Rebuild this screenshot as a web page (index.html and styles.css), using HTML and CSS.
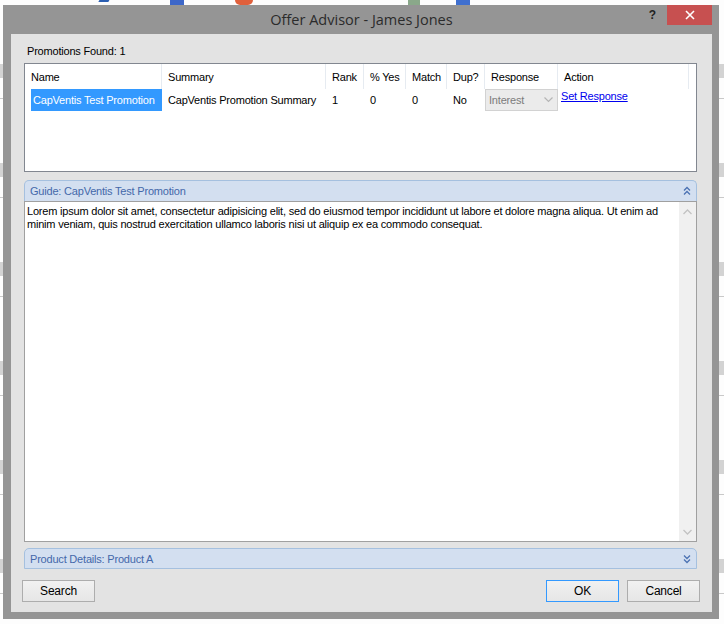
FILE: index.html
```html
<!DOCTYPE html>
<html lang="en">
  <head>
    <meta charset="UTF-8" />
    <meta name="viewport" content="width=device-width, initial-scale=1.0" />
    <title>Offer Advisor - James Jones</title>
    <link rel="stylesheet" href="styles.css">
  </head>

  <body>
    <div class="desktop">
      <span class="tool tool-check"></span>
      <span class="tool tool-blue"></span>
      <span class="tool tool-red"></span>
      <span class="tool tool-green"></span>
      <span class="tool tool-blue2"></span>
    </div>

    <div class="window">
      <div class="titlebar">
        <div class="title">Offer Advisor - James Jones</div>
        <div class="controls">
          <span class="help">?</span>
          <span class="close">
            <svg width="10" height="10" viewBox="0 0 10 10">
              <path d="M1 1 L9 9 M9 1 L1 9" stroke="#fff" stroke-width="1.6" fill="none" />
            </svg>
          </span>
        </div>
      </div>

      <div class="client">
        <div class="found">Promotions Found: 1</div>

        <div class="list">
          <div class="list-head">
            <div class="cell">Name</div>
            <div class="cell">Summary</div>
            <div class="cell">Rank</div>
            <div class="cell">% Yes</div>
            <div class="cell">Match</div>
            <div class="cell">Dup?</div>
            <div class="cell">Response</div>
            <div class="cell">Action</div>
            <div class="cell last"></div>
          </div>
          <div class="list-row">
            <div class="cell"><span class="selected">CapVentis Test Promotion</span></div>
            <div class="cell">CapVentis Promotion Summary</div>
            <div class="cell">1</div>
            <div class="cell">0</div>
            <div class="cell">0</div>
            <div class="cell">No</div>
            <div class="cell combo-cell">
              <div class="combo">
                <span>Interest</span>
                <svg width="9" height="6" viewBox="0 0 9 6">
                  <path d="M0.5 0.5 L4.5 4.5 L8.5 0.5" stroke="#b5b5b5" stroke-width="1.2" fill="none" />
                </svg>
              </div>
            </div>
            <div class="cell action-cell"><a href="#" class="link">Set Response</a></div>
            <div class="cell last"></div>
          </div>
        </div>

        <div class="panel-head guide-head">
          <span>Guide: CapVentis Test Promotion</span>
          <svg width="8" height="10" viewBox="0 0 8 10">
            <path d="M1 4.5 L4 1.5 L7 4.5 M1 8.5 L4 5.5 L7 8.5" stroke="#4b72b3" stroke-width="1.3" fill="none" />
          </svg>
        </div>
        <div class="guide-body">
          <p class="guide-text">Lorem ipsum dolor sit amet, consectetur adipisicing elit, sed do eiusmod tempor incididunt ut labore et dolore magna aliqua. Ut enim ad minim veniam, quis nostrud exercitation ullamco laboris nisi ut aliquip ex ea commodo consequat.</p>
          <div class="scrollbar">
            <svg width="9" height="6" viewBox="0 0 9 6">
              <path d="M0.5 5 L4.5 1 L8.5 5" stroke="#c3c3c3" stroke-width="1.3" fill="none" />
            </svg>
            <svg width="9" height="6" viewBox="0 0 9 6">
              <path d="M0.5 1 L4.5 5 L8.5 1" stroke="#c3c3c3" stroke-width="1.3" fill="none" />
            </svg>
          </div>
        </div>

        <div class="panel-head product-head">
          <span>Product Details: Product A</span>
          <svg width="8" height="10" viewBox="0 0 8 10">
            <path d="M1 1.5 L4 4.5 L7 1.5 M1 5.5 L4 8.5 L7 5.5" stroke="#4b72b3" stroke-width="1.3" fill="none" />
          </svg>
        </div>

        <div class="buttons">
          <button class="btn">Search</button>
          <button class="btn btn-default">OK</button>
          <button class="btn btn-cancel">Cancel</button>
        </div>
      </div>
    </div>
  </body>
</html>
```

FILE: styles.css
```css
body {
  margin: 0;
  width: 724px;
  height: 624px;
  overflow: hidden;
  position: relative;
  font-family: "Liberation Sans", Arial, sans-serif;
  font-size: 11px;
  letter-spacing: -0.2px;
  color: #000;
}

/* the application behind the dialog */
.desktop {
  position: absolute;
  inset: 0;
  background-color: #fdfdfd;
  background-image: repeating-linear-gradient(
    to bottom,
    #fdfdfd 0px,
    #fdfdfd 64px,
    #d3d3d3 64px,
    #d3d3d3 78px,
    #fdfdfd 78px,
    #fdfdfd 98px,
    #c9c9c9 98px,
    #c9c9c9 99px
  );
}

.tool {
  position: absolute;
  top: 0;
  height: 5px;
}

.tool-check {
  left: 98px;
  width: 10px;
  border-top: 2px solid #2b5fb3;
  height: 3px;
  transform: skewX(-30deg);
}

.tool-blue {
  left: 170px;
  width: 14px;
  background: #3d67c9;
}

.tool-red {
  left: 235px;
  width: 18px;
  background: #e0603c;
  border-radius: 0 0 8px 8px;
}

.tool-green {
  left: 408px;
  width: 12px;
  background: #8aa88a;
}

.tool-blue2 {
  left: 456px;
  width: 14px;
  background: #3f6fcf;
}

.window {
  position: absolute;
  left: 3px;
  top: 5px;
  width: 716px;
  height: 614px;
  box-sizing: border-box;
  background: #959595;
  padding: 0 7px 7px 8px;
  display: flex;
  flex-direction: column;
}

.titlebar {
  height: 29px;
  position: relative;
  display: flex;
  justify-content: center;
  align-items: center;
}

.title {
  font-family: "Open Sans", "Noto Sans", sans-serif;
  font-size: 14.5px;
  letter-spacing: 0;
  color: #2b2b2b;
  padding-bottom: 1px;
}

.controls {
  position: absolute;
  top: 0;
  right: 0;
  display: flex;
  align-items: flex-start;
}

.help {
  font-family: "Liberation Sans", Arial, sans-serif;
  font-weight: bold;
  font-size: 12px;
  color: #222;
  line-height: 21px;
  margin-right: 11px;
}

.close {
  width: 45px;
  height: 20px;
  background: #c75050;
  display: flex;
  justify-content: center;
  align-items: center;
}

.client {
  flex: 1;
  background: #e3e3e3;
  padding-top: 10px;
  display: flex;
  flex-direction: column;
}

.found,
.list,
.panel-head,
.guide-body {
  margin-left: 13px;
  margin-right: 15px;
}

.found {
  line-height: 14px;
  padding-left: 3px;
}

.list {
  margin-top: 5px;
  height: 109px;
  box-sizing: border-box;
  border: 1px solid #828790;
  background: #fff;
}

.list-head,
.list-row {
  display: grid;
  grid-template-columns: 137px 164px 38px 42px 41px 38px 73px 131px 1fr;
}

.list-head .cell {
  height: 25px;
  line-height: 25px;
  box-sizing: border-box;
  padding: 1px 0 0 6px;
  border-right: 1px solid #e6ebf1;
  white-space: nowrap;
}

.list-head .last {
  border-right: none;
}

.list-row .cell {
  height: 22px;
  line-height: 22px;
  padding-left: 6px;
  white-space: nowrap;
}

.list-row .selected {
  display: block;
  background: #3399ff;
  color: #fff;
  padding-left: 2px;
}

.list-row .combo-cell {
  padding-left: 0;
}

.combo {
  height: 22px;
  box-sizing: border-box;
  border: 1px solid #d2d2d2;
  background: #ebebeb;
  color: #7c7c7c;
  display: flex;
  justify-content: space-between;
  align-items: center;
  padding: 0 4px 0 3px;
  line-height: 20px;
}

.list-row .action-cell {
  padding-left: 3px;
  line-height: 14px;
}

.link {
  color: #0000ee;
  text-decoration: underline;
}

.panel-head {
  height: 21px;
  box-sizing: border-box;
  border: 1px solid #a5c0df;
  border-radius: 5px 5px 0 0;
  background: #d3dff0;
  color: #4468aa;
  display: flex;
  justify-content: space-between;
  align-items: center;
  padding: 0 5px 0 5px;
}

.guide-head {
  margin-top: 8px;
  border-bottom: none;
}

.guide-body {
  height: 341px;
  box-sizing: border-box;
  border: 1px solid #a0a0a0;
  background: #fff;
  display: flex;
}

.guide-text {
  margin: 0;
  flex: 1;
  padding: 3px 0 0 2px;
  line-height: 13px;
}

.scrollbar {
  width: 17px;
  background: #f0f0f0;
  display: flex;
  flex-direction: column;
  justify-content: space-between;
  align-items: center;
  padding: 7px 0 6px;
  box-sizing: border-box;
}

.product-head {
  margin-top: 6px;
}

.buttons {
  display: flex;
  margin: 11px 12px 0 11px;
}

.btn {
  width: 73px;
  height: 22px;
  box-sizing: border-box;
  border: 1px solid #adadad;
  background: linear-gradient(#f1f1f1, #e6e6e6);
  font-family: "Liberation Sans", Arial, sans-serif;
  font-size: 12px;
  letter-spacing: -0.2px;
  color: #000;
  padding: 0;
}

.btn-default {
  margin-left: auto;
  border-color: #3399ff;
}

.btn-cancel {
  margin-left: 8px;
}
```
